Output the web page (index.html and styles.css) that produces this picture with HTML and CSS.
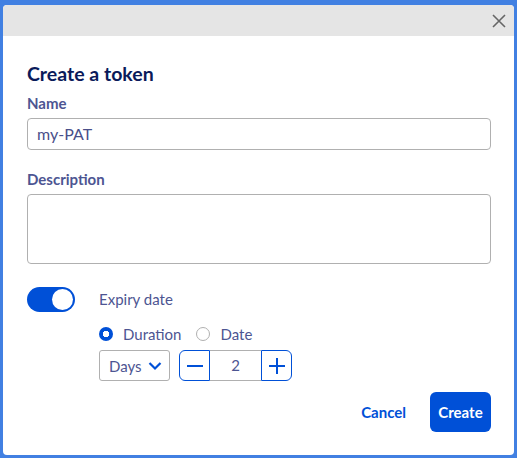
FILE: index.html
```html
<!DOCTYPE html>
<html>
<head>
<meta charset="utf-8">
<link rel="stylesheet" href="styles.css">
</head>
<body>
<div class="dialog">
  <div class="header">
    <button class="close" aria-label="Close">
      <svg width="14" height="14" viewBox="0 0 14 14"><path d="M1 1L13 13M13 1L1 13" stroke="#666" stroke-width="1.6" fill="none"/></svg>
    </button>
  </div>
  <div class="body">
    <h1 class="title">Create a token</h1>
    <label class="label">Name</label>
    <div class="input">my-PAT</div>
    <label class="label label-desc">Description</label>
    <div class="textarea"></div>
    <div class="expiry">
      <div class="toggle"><span class="knob"></span></div>
      <div class="expiry-content">
        <div class="expiry-label">Expiry date</div>
        <div class="radios">
          <span class="radio checked"></span><span class="radio-text">Duration</span>
          <span class="radio"></span><span class="radio-text">Date</span>
        </div>
        <div class="controls">
          <div class="select">Days
            <svg width="14" height="10" viewBox="0 0 14 10"><path d="M1.5 2L7 7.5L12.5 2" stroke="#0050d7" stroke-width="2.2" fill="none"/></svg>
          </div>
          <div class="stepper">
            <span class="step-btn">
              <svg width="18" height="18" viewBox="0 0 18 18"><path d="M1 9H17" stroke="#0050d7" stroke-width="2"/></svg>
            </span>
            <span class="step-value">2</span>
            <span class="step-btn">
              <svg width="18" height="18" viewBox="0 0 18 18"><path d="M1 9H17M9 1V17" stroke="#0050d7" stroke-width="2"/></svg>
            </span>
          </div>
        </div>
      </div>
    </div>
    <div class="footer">
      <button class="btn-link">Cancel</button>
      <button class="btn-primary">Create</button>
    </div>
  </div>
</div>
</body>
</html>
```

FILE: styles.css
```css
html, body {
  margin: 0;
  padding: 0;
  background: #4180e2;
  font-family: "Lato", "Liberation Sans", sans-serif;
}
.dialog {
  margin: 5px 3px 3px 3px;
  height: 450px;
  background: #fff;
  border-radius: 4px;
  overflow: hidden;
  display: flex;
  flex-direction: column;
}
.header {
  height: 31px;
  background: #e5e5e5;
  display: flex;
  justify-content: flex-end;
  align-items: center;
  padding-right: 8px;
}
.close {
  border: 0;
  background: transparent;
  padding: 0;
  width: 14px;
  height: 14px;
  display: flex;
}
.body {
  padding: 26px 23px 0 24px;
  display: flex;
  flex-direction: column;
}
.title {
  margin: 0 0 7px 0;
  font-size: 19.5px;
  line-height: 24px;
  font-weight: 700;
  color: #0a1a5a;
}
.label {
  font-size: 15px;
  line-height: 20px;
  font-weight: 700;
  color: #4d5592;
  margin-bottom: 5px;
}
.label-desc {
  margin-top: 19px;
}
.input {
  height: 30px;
  border: 1px solid #b0b0b0;
  border-radius: 4px;
  padding: 0 9px;
  font-size: 16px;
  line-height: 30px;
  color: #4a4f8a;
}
.textarea {
  height: 68px;
  border: 1px solid #b0b0b0;
  border-radius: 4px;
}
.expiry {
  margin-top: 23px;
  display: flex;
  gap: 24px;
}
.toggle {
  width: 48px;
  height: 25px;
  border-radius: 13px;
  background: #0050d7;
  position: relative;
  flex: none;
}
.knob {
  position: absolute;
  right: 2px;
  top: 2px;
  width: 21px;
  height: 21px;
  border-radius: 50%;
  background: #fff;
}
.expiry-content {
  display: flex;
  flex-direction: column;
}
.expiry-label {
  font-size: 15px;
  line-height: 25px;
  color: #4d5592;
}
.radios {
  margin-top: 10px;
  display: flex;
  align-items: center;
  height: 24px;
  font-size: 15px;
  color: #4d5592;
}
.radio {
  width: 12px;
  height: 12px;
  border: 1px solid #b0b0b0;
  border-radius: 50%;
  margin-right: 10px;
  box-sizing: content-box;
}
.radio.checked {
  border: 0;
  width: 14px;
  height: 14px;
  background: radial-gradient(circle, #fff 0 3px, #0050d7 3.5px);
}
.radio-text {
  margin-right: 15px;
}
.controls {
  margin-top: 4px;
  display: flex;
  gap: 9px;
}
.select {
  width: 71px;
  height: 31px;
  box-sizing: border-box;
  border: 1px solid #b0b0b0;
  border-radius: 3px;
  display: flex;
  align-items: center;
  justify-content: space-between;
  padding: 0 7px 0 9px;
  font-size: 15px;
  color: #4d5592;
}
.stepper {
  display: flex;
  height: 31px;
}
.step-btn {
  width: 31px;
  height: 31px;
  box-sizing: border-box;
  border: 1px solid #0050d7;
  display: flex;
  align-items: center;
  justify-content: center;
}
.step-btn:first-child {
  border-radius: 6px 0 0 6px;
}
.step-btn:last-child {
  border-radius: 0 6px 6px 0;
}
.step-value {
  width: 51px;
  height: 31px;
  box-sizing: border-box;
  border-top: 1px solid #b0b0b0;
  border-bottom: 1px solid #b0b0b0;
  text-align: center;
  font-size: 15px;
  line-height: 29px;
  color: #4d5592;
}
.footer {
  margin-top: 11px;
  display: flex;
  justify-content: flex-end;
  align-items: center;
  gap: 12px;
}
.btn-link {
  border: 0;
  background: transparent;
  font-family: inherit;
  font-size: 15px;
  font-weight: 700;
  color: #0050d7;
  padding: 0 12px;
  height: 40px;
}
.btn-primary {
  border: 0;
  background: #0050d7;
  color: #fff;
  font-family: inherit;
  font-size: 15px;
  font-weight: 700;
  border-radius: 6px;
  width: 61px;
  height: 40px;
  padding: 0;
}
```
